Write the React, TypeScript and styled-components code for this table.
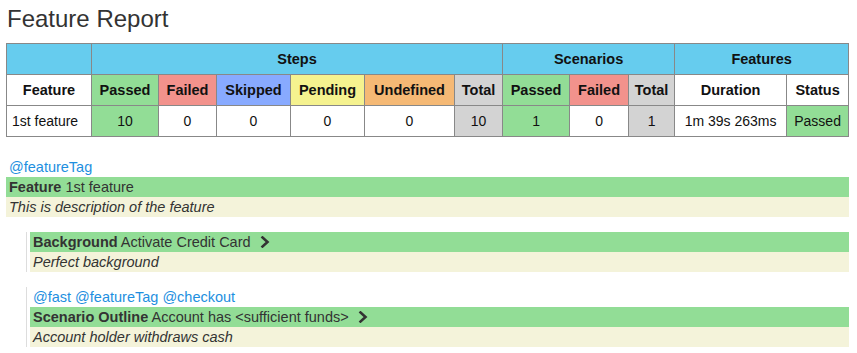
import React from "react";
import styled, {createGlobalStyle} from "styled-components";

const GlobalStyle = createGlobalStyle`
  body {
    margin: 0;
    background: #fff;
    font-family: "Liberation Sans", Arial, sans-serif;
    color: #333;
  }
`;

const blue = "#66ccee";
const green = "#92dd96";
const red = "#f2928c";
const skipBlue = "#88aaff";
const yellow = "#f5f28f";
const orange = "#f5b975";
const grey = "#d3d3d3";
const beige = "#f4f3da";
const tagBlue = "#1e8fe0";

type Step = {label: string; value: string; color: string; width: number};

const steps: Step[] = [
  {label: "Passed", value: "10", color: green, width: 67},
  {label: "Failed", value: "0", color: red, width: 58},
  {label: "Skipped", value: "0", color: skipBlue, width: 74},
  {label: "Pending", value: "0", color: yellow, width: 74},
  {label: "Undefined", value: "0", color: orange, width: 90},
  {label: "Total", value: "10", color: grey, width: 48},
];

const scenarios: Step[] = [
  {label: "Passed", value: "1", color: green, width: 67},
  {label: "Failed", value: "0", color: red, width: 59},
  {label: "Total", value: "1", color: grey, width: 46},
];

// only passed and total cells carry their colour in the data row
const tinted = (s: Step) => s.label === "Passed" || s.label === "Total" ? s.color : undefined;

function Chevron() {
  return <ChevronIcon width="10" height="12" viewBox="0 0 10 12">
    <path d="M2.5 1.5 L7.5 6 L2.5 10.5" fill="none" stroke="#333" strokeWidth="2.6" strokeLinecap="square" />
  </ChevronIcon>;
}

export default function App() {
  return <Page>
    <GlobalStyle />
    <Title>Feature Report</Title>
    <Report>
      <colgroup>
        <col style={{width: 85}} />
        {steps.map((s, i) => <col key={"s" + i} style={{width: s.width}} />)}
        {scenarios.map((s, i) => <col key={"c" + i} style={{width: s.width}} />)}
        <col style={{width: 112}} />
        <col style={{width: 62}} />
      </colgroup>
      <thead>
        <tr>
          <Head bg={blue} />
          <Head bg={blue} colSpan={6}>Steps</Head>
          <Head bg={blue} colSpan={3}>Scenarios</Head>
          <Head bg={blue} colSpan={2}>Features</Head>
        </tr>
        <tr>
          <Head>Feature</Head>
          {steps.map(s => <Head key={s.label} bg={s.color}>{s.label}</Head>)}
          {scenarios.map(s => <Head key={s.label} bg={s.color}>{s.label}</Head>)}
          <Head>Duration</Head>
          <Head>Status</Head>
        </tr>
      </thead>
      <tbody>
        <tr>
          <Cell align="left">1st feature</Cell>
          {steps.map(s => <Cell key={s.label} bg={tinted(s)}>{s.value}</Cell>)}
          {scenarios.map(s => <Cell key={s.label} bg={tinted(s)}>{s.value}</Cell>)}
          <Cell>1m 39s 263ms</Cell>
          <Cell bg={green}>Passed</Cell>
        </tr>
      </tbody>
    </Report>

    <Feature>
      <Tags>@featureTag</Tags>
      <Bar><b>Feature</b> 1st feature</Bar>
      <Description>This is description of the feature</Description>
    </Feature>

    <Element>
      <Bar><b>Background</b> Activate Credit Card <Chevron /></Bar>
      <Description>Perfect background</Description>
    </Element>

    <Element>
      <Tags>@fast @featureTag @checkout</Tags>
      <Bar><b>Scenario Outline</b> Account has &lt;sufficient funds&gt; <Chevron /></Bar>
      <Description>Account holder withdraws cash</Description>
    </Element>
  </Page>;
}

const Page = styled.div`
  padding: 5px 8px 0 6px;
  width: 843px;
`;

const Title = styled.div`
  margin: 0 0 10px 1px;
  font-family: "Liberation Sans", Arial, sans-serif;
  font-size: 24px;
  line-height: 28px;
  font-weight: normal;
  color: #333;
`;

const Report = styled.table`
  width: 843px;
  table-layout: fixed;
  border-collapse: collapse;
  font-size: 14px;
  color: #111;
`;

const Head = styled.th<{bg?: string}>`
  height: 30px;
  padding: 0 2px;
  border: 1px solid #888;
  background: ${p => p.bg || "#fff"};
  font-weight: bold;
  font-size: 14.5px;
  text-align: center;
  white-space: nowrap;
`;

const Cell = styled.td<{bg?: string; align?: string}>`
  height: 30px;
  padding: 0 5px;
  border: 1px solid #888;
  background: ${p => p.bg || "#fff"};
  text-align: ${p => p.align || "center"};
  white-space: nowrap;
`;

const Feature = styled.div`
  margin-top: 20px;
  font-size: 14.5px;
`;

const Element = styled.div`
  margin: 15px 0 0 20px;
  padding-left: 3px;
  border-left: 1px solid #ddd;
  font-size: 14.5px;
`;

const Tags = styled.div`
  height: 20px;
  line-height: 20px;
  padding-left: 3px;
  color: ${tagBlue};
`;

const Bar = styled.div`
  height: 20px;
  line-height: 20px;
  padding-left: 3px;
  background: ${green};
  color: #333;
  display: flex;
  align-items: center;
  white-space: pre;

  b {
    font-weight: bold;
  }
`;

const ChevronIcon = styled.svg`
  margin-left: 5px;
`;

const Description = styled.div`
  height: 20px;
  line-height: 20px;
  padding-left: 3px;
  background: ${beige};
  color: #333;
  font-style: italic;
`;
